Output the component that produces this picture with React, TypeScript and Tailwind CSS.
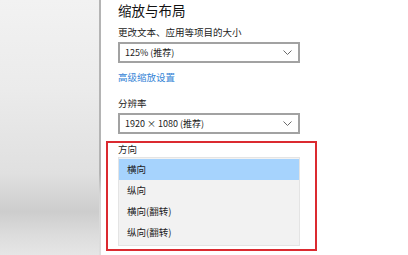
const FONT = { fontFamily: '"Noto Sans CJK SC", "Noto Sans", sans-serif' };

const OPTIONS = ['横向', '纵向', '横向(翻转)', '纵向(翻转)'];

function Chevron() {
  return (
    <svg width="9" height="5" viewBox="0 0 9 5" className="shrink-0">
      <polyline points="0.5,0.5 4.5,4.5 8.5,0.5" fill="none" stroke="#6a6a6a" strokeWidth="1" />
    </svg>
  );
}

function Select({ value }: { value: string }) {
  return (
    <div className="flex h-[21px] w-[182px] items-center justify-between border-2 border-[#a2a2a2] bg-white pl-[5px] pr-[6px] text-[9px] leading-none text-[#222]">
      <span>{value}</span>
      <Chevron />
    </div>
  );
}

export default function App() {
  return (
    <div className="flex h-[255px] w-[408px] overflow-hidden bg-white" style={FONT}>
      {/* blurred side area */}
      <div className="h-full w-[99px] bg-[linear-gradient(to_bottom,#f2f2f2_0%,#ebebeb_35%,#e0e0e0_68%,#cdcdcd_83%,#dcdcdc_92%,#e6e6e6_100%)]" />
      <div className="h-full w-[2px] bg-[linear-gradient(to_bottom,#b4b4b4_0%,#b4b4b4_68%,#d6d6d6_76%,#dedede_100%)]" />

      <div className="flex-1 pl-[17px]">
        <div className="mt-[1px] text-[13.5px] leading-[18px] text-[#111]">缩放与布局</div>

        <div className="mt-[7px] text-[9.5px] leading-[12px] text-[#222]">更改文本、应用等项目的大小</div>
        <div className="mt-[4px]">
          <Select value="125% (推荐)" />
        </div>

        <div className="mt-[8px] text-[9.5px] leading-[12px] text-[#3584d6]">高级缩放设置</div>

        <div className="mt-[14px] text-[9.5px] leading-[12px] text-[#222]">分辨率</div>
        <div className="mt-[4px]">
          <Select value="1920 × 1080 (推荐)" />
        </div>

        {/* highlighted orientation dropdown */}
        <div className="-ml-[12px] mt-[7px] w-[211px] border-2 border-[#db2a30] pb-[3px] pl-[10px]">
          <div className="text-[9.5px] leading-[12px] text-[#222]">方向</div>
          <div className="mt-[2px] w-[182px] border border-[#e4e4e4] bg-[#f2f2f2] pb-[2px] pt-[1px]">
            {OPTIONS.map((o, i) => (
              <div
                key={o}
                className={`flex h-[21px] items-center pl-[8px] text-[9.5px] leading-none text-[#222] ${
                  i === 0 ? 'bg-[#a6d3fd]' : ''
                }`}
              >
                {o}
              </div>
            ))}
          </div>
        </div>
      </div>
    </div>
  );
}
